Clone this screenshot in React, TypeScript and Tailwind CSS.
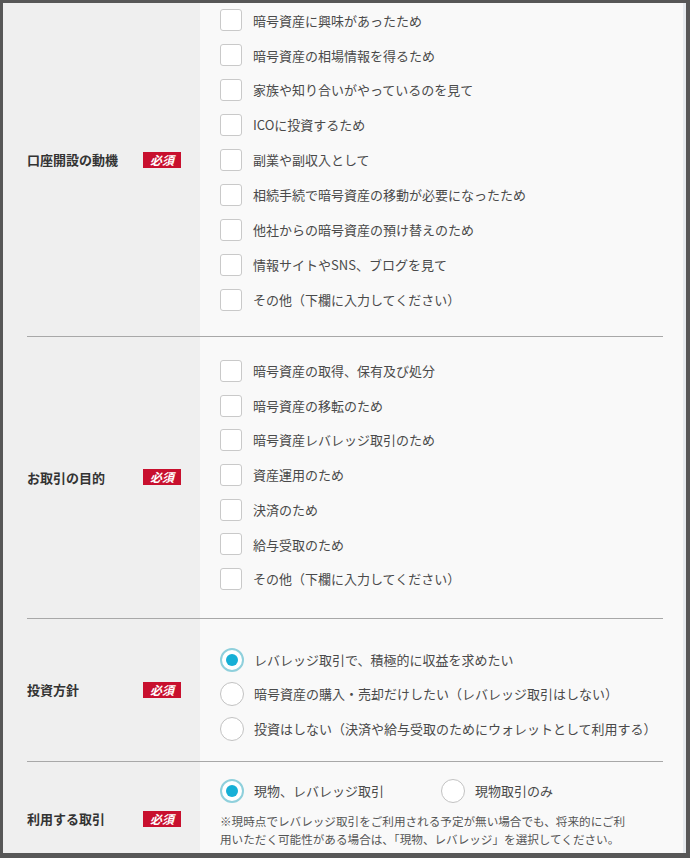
import React from 'react';

const font = { fontFamily: '"Noto Sans CJK JP", "Noto Sans", sans-serif' };

function Badge() {
  return (
    <span className="inline-flex items-center justify-center w-[38px] h-[16px] bg-[#c8102e] text-white text-[12px] font-semibold italic leading-none">
      必須
    </span>
  );
}

function Checkbox({ label, h }: { label: string; h: string }) {
  return (
    <label className={`flex items-center gap-[11px] ${h}`}>
      <span className="w-[22px] h-[22px] rounded-[3px] border-[1.5px] border-[#c9c9c9] bg-white shrink-0" />
      <span className="text-[13px] text-[#4a4a4a]">{label}</span>
    </label>
  );
}

function Radio({ label, checked }: { label: string; checked?: boolean }) {
  return (
    <label className="flex items-center gap-[10px] h-[34.5px]">
      {checked ? (
        <span className="w-[24px] h-[24px] rounded-full border-2 border-[#8fd0dc] bg-white flex items-center justify-center shrink-0">
          <span className="w-[12px] h-[12px] rounded-full bg-[#16afd6]" />
        </span>
      ) : (
        <span className="w-[24px] h-[24px] rounded-full border-[1.5px] border-[#c2c2c2] bg-white shrink-0" />
      )}
      <span className="text-[13px] text-[#4a4a4a] whitespace-nowrap">{label}</span>
    </label>
  );
}

function Section({ title, children, className, labelClass, grow }: { title: string; children: React.ReactNode; className?: string; labelClass?: string; grow?: boolean }) {
  return (
    <div className={`flex ${grow ? 'flex-1' : ''}`}>
      <div className={`w-[197px] bg-[#efefef] flex items-center pl-[24px] ${labelClass ?? ''}`}>
        <span className="text-[13px] font-bold text-[#333] w-[116px]">{title}</span>
        <Badge />
      </div>
      <div className={`flex-1 bg-[#f9f9f9] pl-[20px] ${className ?? ''}`}>{children}</div>
    </div>
  );
}

function Divider() {
  return (
    <div className="flex">
      <div className="w-[197px] bg-[#efefef] pl-[24px]">
        <div className="h-px bg-[#a8a8a8]" />
      </div>
      <div className="flex-1 bg-[#f9f9f9] pr-[20px]">
        <div className="h-px bg-[#a8a8a8]" />
      </div>
    </div>
  );
}

const motives = [
  '暗号資産に興味があったため',
  '暗号資産の相場情報を得るため',
  '家族や知り合いがやっているのを見て',
  'ICOに投資するため',
  '副業や副収入として',
  '相続手続で暗号資産の移動が必要になったため',
  '他社からの暗号資産の預け替えのため',
  '情報サイトやSNS、ブログを見て',
  'その他（下欄に入力してください）',
];

const purposes = [
  '暗号資産の取得、保有及び処分',
  '暗号資産の移転のため',
  '暗号資産レバレッジ取引のため',
  '資産運用のため',
  '決済のため',
  '給与受取のため',
  'その他（下欄に入力してください）',
];

export default function App() {
  return (
    <div style={font} className="w-[690px] h-[858px] bg-[#575757] pt-[3px] pl-[3px] pr-[4px] pb-[5px] overflow-hidden">
      <div className="flex h-full overflow-hidden">
        <div className="flex-1 flex flex-col overflow-hidden">
          <Section title="口座開設の動機" className="pb-[19px]" labelClass="pb-[20px]">
            {motives.map((m) => (
              <Checkbox key={m} label={m} h="h-[34.9px]" />
            ))}
          </Section>
          <Divider />
          <Section title="お取引の目的" className="pt-[16.5px] pb-[21.5px]">
            {purposes.map((m) => (
              <Checkbox key={m} label={m} h="h-[34.7px]" />
            ))}
          </Section>
          <Divider />
          <Section title="投資方針" className="pt-[23.5px] pb-[15px]">
            <Radio checked label="レバレッジ取引で、積極的に収益を求めたい" />
            <Radio label="暗号資産の購入・売却だけしたい（レバレッジ取引はしない）" />
            <Radio label="投資はしない（決済や給与受取のためにウォレットとして利用する）" />
          </Section>
          <Divider />
          <Section title="利用する取引" className="pt-[11.5px]" labelClass="pt-[23px]" grow>
            <div className="flex gap-[57px]">
              <Radio checked label="現物、レバレッジ取引" />
              <Radio label="現物取引のみ" />
            </div>
            <p className="text-[11.6px] leading-[18px] text-[#555] max-w-[410px] mt-[4px]">
              ※現時点でレバレッジ取引をご利用される予定が無い場合でも、将来的にご利用いただく可能性がある場合は、「現物、レバレッジ」を選択してください。
            </p>
          </Section>
        </div>
        <div className="w-[3px] bg-[#e6eaee]" />
      </div>
    </div>
  );
}
